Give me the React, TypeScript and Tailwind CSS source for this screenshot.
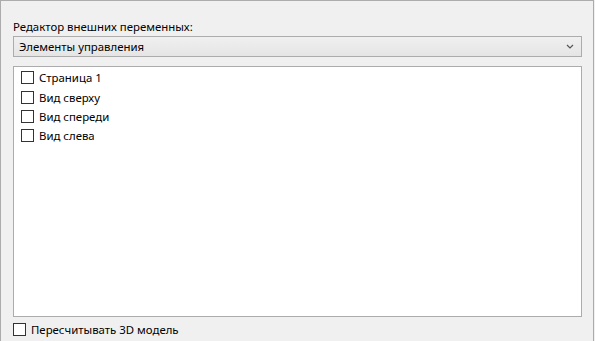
import React from "react";

const items = ["Страница 1", "Вид сверху", "Вид спереди", "Вид слева"];

function Box() {
  return <span className="block h-[13px] w-[13px] shrink-0 border border-[#333333] bg-white" />;
}

export default function App() {
  return (
    <div
      className="h-[341px] w-[595px] overflow-hidden bg-[#f0f0f0] text-[11.4px] text-black"
      style={{ fontFamily: '"Noto Sans", "Liberation Sans", sans-serif' }}
    >
      <div className="flex h-[341px] w-[594px] flex-col border-l border-r border-t border-[#acacac] pl-[12px] pr-[11px]">
        <div className="mt-[17px] h-[17px] leading-[17px]">Редактор внешних переменных:</div>
        <div className="mt-[1px] flex h-[21px] items-center justify-between border border-[#acacac] bg-gradient-to-b from-[#f0f0f0] to-[#e5e5e5] pl-[5px] pr-[7px]">
          <span className="leading-[17px]">Элементы управления</span>
          <svg width="8" height="5" viewBox="0 0 8 5">
            <path d="M1 1 L4 4 L7 1" fill="none" stroke="#555" strokeWidth="1.2" />
          </svg>
        </div>
        <div className="mt-[9px] flex h-[251px] flex-col border border-[#acacac] bg-white pl-[7px] pt-[1px]">
          {items.map((t) => (
            <div key={t} className="flex h-[19.4px] items-center gap-[5px]">
              <Box />
              <span className="leading-[17px]">{t}</span>
            </div>
          ))}
        </div>
        <div className="mt-[5px] flex h-[14px] items-center gap-[5px]">
          <Box />
          <span className="leading-[17px]">Пересчитывать 3D модель</span>
        </div>
      </div>
    </div>
  );
}
